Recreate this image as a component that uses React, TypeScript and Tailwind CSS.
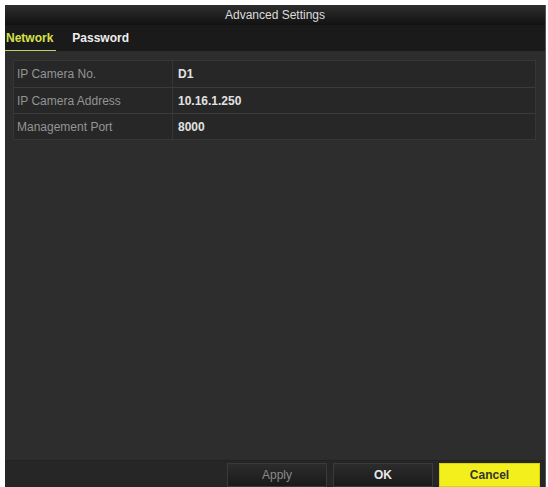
export default function App() {
  const rows = [
    { label: "IP Camera No.", value: "D1" },
    { label: "IP Camera Address", value: "10.16.1.250" },
    { label: "Management Port", value: "8000" },
  ]

  return (
    <div className="w-[548px] h-[487px] bg-white pt-[5px] pl-[5px] pr-[2px] overflow-hidden" style={{ fontFamily: '"Liberation Sans", Arial, sans-serif' }}>
      <div className="flex flex-col h-[482px] bg-[#2d2d2d] border-r border-[#555]">
        {/* title */}
        <div className="h-[20px] flex items-center justify-center bg-gradient-to-b from-[#2e2e2e] to-[#121212] text-[12px] text-[#dcdcdc]">
          Advanced Settings
        </div>

        {/* tabs */}
        <div className="h-[26px] flex items-end gap-4 bg-[#1a1a1a] text-[12px] font-bold">
          <div className="pb-[3px] border-b border-[#c8cc66] pl-[1px] pr-[3px] text-[#d7e24a]">Network</div>
          <div className="pb-[4px] text-[#eeeeee]">Password</div>
        </div>

        {/* content */}
        <div className="flex-1 pt-[9px] pl-[8px] pr-[9px]">
          <div className="border border-[#363636] bg-[#272727]">
            {rows.map((r, i) => (
              <div key={r.label} className={"flex h-[26px] items-center text-[12px] " + (i > 0 ? "border-t border-[#3b3b3b]" : "")}>
                <div className="w-[159px] pl-[3px] h-full flex items-center text-[#949494] border-r border-[#353535]">{r.label}</div>
                <div className="pl-[5px] text-[#e2e2e2] font-bold">{r.value}</div>
              </div>
            ))}
          </div>
        </div>

        {/* footer */}
        <div className="h-[27px] bg-[#262626] border-t border-[#222] flex items-end justify-end gap-[6px] pr-[5px]">
          <button className="w-[100px] h-[24px] bg-gradient-to-b from-[#2c2c2c] to-[#1a1a1a] border border-[#3a3a3a] text-[12px] text-[#8a8a8a]">Apply</button>
          <button className="w-[100px] h-[24px] bg-gradient-to-b from-[#2c2c2c] to-[#1a1a1a] border border-[#3a3a3a] text-[12px] font-bold text-[#e8e8e8]">OK</button>
          <button className="w-[101px] h-[24px] bg-[#f2ef1c] border border-[#d8d400] text-[12px] font-bold text-[#333]">Cancel</button>
        </div>
      </div>
    </div>
  )
}
